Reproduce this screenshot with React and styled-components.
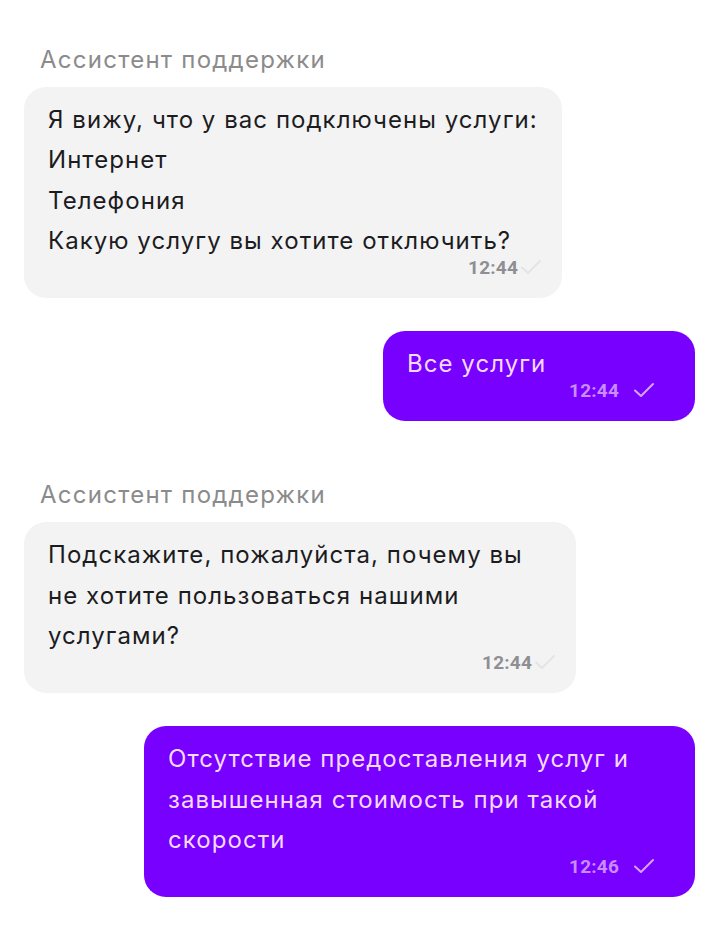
import React from "react";
import styled, { createGlobalStyle } from "styled-components";

const Global = createGlobalStyle`
  html, body { margin: 0; padding: 0; background: #ffffff; }
  body { font-family: Inter, "Noto Sans", sans-serif; -webkit-font-smoothing: antialiased; }
`;

const Page = styled.div`
  width: 720px;
  min-height: 949px;
  box-sizing: border-box;
  padding: 45px 25px 0 24px;
  display: flex;
  flex-direction: column;
`;

const Group = styled.div`
  display: flex;
  flex-direction: column;
  align-items: ${(p) => (p.$out ? "flex-end" : "flex-start")};
  margin-top: ${(p) => p.$gap || 0}px;
`;

const Sender = styled.div`
  font-size: 24px;
  line-height: 30px;
  color: #8b8b8b;
  padding-left: 16px;
  margin-bottom: 12px;
  letter-spacing: 1.25px;
`;

const Bubble = styled.div`
  box-sizing: border-box;
  max-width: 552px;
  border-radius: 22px;
  padding: 13px 24px 21px 24px;
  background: ${(p) => (p.$out ? "#7700ff" : "#f3f3f4")};
  color: ${(p) => (p.$out ? "#f6d9ff" : "#1c1c1e")};
  width: ${(p) => (p.$w ? `${p.$w}px` : "auto")};
`;

const Text = styled.div`
  font-size: 24px;
  line-height: 40.3px;
  letter-spacing: 1.05px;
  white-space: nowrap;
`;

const Meta = styled.div`
  display: flex;
  justify-content: flex-end;
  align-items: center;
  gap: ${(p) => (p.$out ? 14 : 2)}px;
  height: 20px;
  margin-top: -4px;
  margin-right: ${(p) => (p.$out ? 16 : -4)}px;
`;

const Time = styled.span`
  font-family: Roboto, "Liberation Sans", sans-serif;
  font-weight: 700;
  font-size: 19px;
  letter-spacing: 0.2px;
  color: ${(p) => (p.$out ? "#c88cff" : "#8e8e93")};
`;

const Check = ({ out }) => (
  <svg width="22" height="16" viewBox="0 0 22 16" fill="none">
    <path
      d="M2 8.5 L8 14 L20 2"
      stroke={out ? "#d6a4ff" : "#e4e4e6"}
      strokeWidth="2"
      strokeLinecap="round"
      strokeLinejoin="round"
    />
  </svg>
);

const Message = ({ out, lines, time, w }) => (
  <Bubble $out={out} $w={w}>
    {lines.map((l, i) => (
      <Text key={i}>{l}</Text>
    ))}
    <Meta $out={out}>
      <Time $out={out}>{time}</Time>
      <Check out={out} />
    </Meta>
  </Bubble>
);

export default function App() {
  return (
    <>
      <Global />
      <Page>
        <Group>
          <Sender>Ассистент поддержки</Sender>
          <Message
            w={538}
            lines={[
              "Я вижу, что у вас подключены услуги:",
              "Интернет",
              "Телефония",
              "Какую услугу вы хотите отключить?",
            ]}
            time="12:44"
          />
        </Group>
        <Group $out $gap={33}>
          <Message out w={312} lines={["Все услуги"]} time="12:44" />
        </Group>
        <Group $gap={59}>
          <Sender>Ассистент поддержки</Sender>
          <Message
            w={552}
            lines={[
              "Подскажите, пожалуйста, почему вы",
              "не хотите пользоваться нашими",
              "услугами?",
            ]}
            time="12:44"
          />
        </Group>
        <Group $out $gap={33}>
          <Message
            out
            w={551}
            lines={[
              "Отсутствие предоставления услуг и",
              "завышенная стоимость при такой",
              "скорости",
            ]}
            time="12:46"
          />
        </Group>
      </Page>
    </>
  );
}
